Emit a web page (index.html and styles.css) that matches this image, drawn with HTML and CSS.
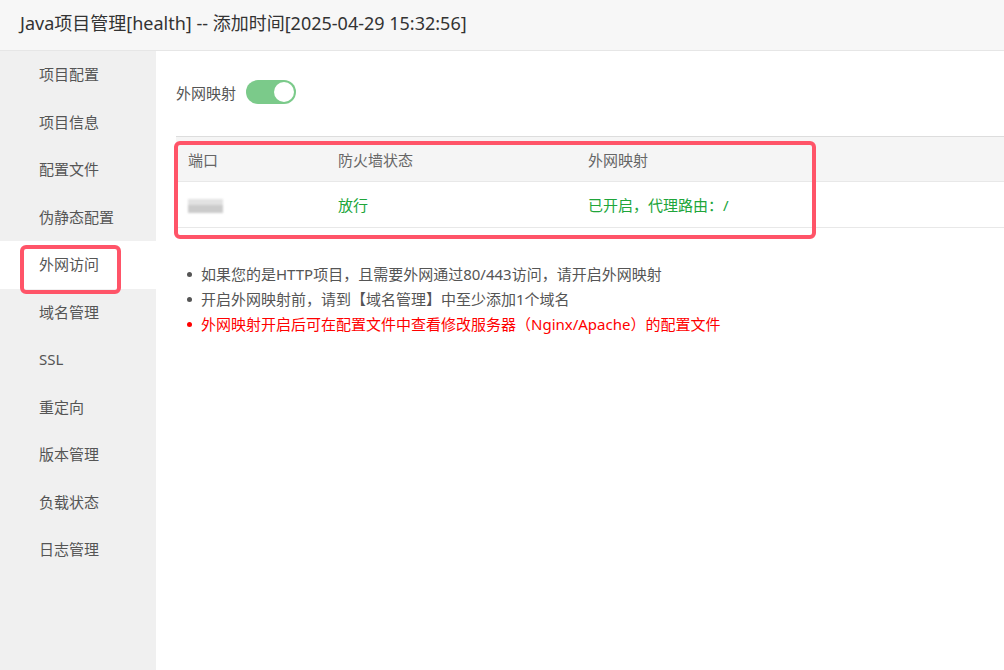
FILE: index.html
```html
<!DOCTYPE html>
<html lang="zh-CN">
<head>
    <meta charset="UTF-8">
    <title>Java项目管理</title>
    <link rel="stylesheet" href="styles.css">
</head>
<body>
    <div class="header">Java项目管理[health] -- 添加时间[2025-04-29 15:32:56]</div>
    <div class="layout">
        <div class="sidebar">
            <div class="nav-item">项目配置</div>
            <div class="nav-item">项目信息</div>
            <div class="nav-item">配置文件</div>
            <div class="nav-item">伪静态配置</div>
            <div class="nav-item active">外网访问<span class="mark nav-mark"></span></div>
            <div class="nav-item">域名管理</div>
            <div class="nav-item">SSL</div>
            <div class="nav-item">重定向</div>
            <div class="nav-item">版本管理</div>
            <div class="nav-item">负载状态</div>
            <div class="nav-item">日志管理</div>
        </div>
        <div class="main">
            <div class="toggle-row">
                <span>外网映射</span>
                <span class="switch on"><span class="knob"></span></span>
            </div>

            <div class="table-wrap">
                <div class="row head">
                    <div class="cell">端口</div>
                    <div class="cell">防火墙状态</div>
                    <div class="cell">外网映射</div>
                </div>
                <div class="row">
                    <div class="cell"><span class="blur-port"></span></div>
                    <div class="cell green">放行</div>
                    <div class="cell green">已开启，代理路由：/</div>
                </div>
                <span class="mark table-mark"></span>
            </div>

            <ul class="tips">
                <li>如果您的是HTTP项目，且需要外网通过80/443访问，请开启外网映射</li>
                <li>开启外网映射前，请到【域名管理】中至少添加1个域名</li>
                <li class="warn">外网映射开启后可在配置文件中查看修改服务器（Nginx/Apache）的配置文件</li>
            </ul>
        </div>
    </div>
</body>
</html>
```

FILE: styles.css
```css
body {
    margin: 0;
    font-family: "Noto Sans", "Noto Sans CJK SC", sans-serif;
    color: #555;
    background: #fff;
    overflow: hidden;
}
.header {
    height: 50px;
    line-height: 47px;
    padding-left: 20px;
    font-size: 18px;
    color: #333;
    background-color: #f7f7f7;
    border-bottom: 1px solid #e6e6e6;
}
.layout {
    display: flex;
    height: 619px;
}
.sidebar {
    width: 156px;
    background-color: #f0f0f0;
    flex-shrink: 0;
}
.nav-item {
    height: 47.5px;
    line-height: 47.5px;
    padding-left: 39px;
    font-size: 15px;
    color: #555;
}
.nav-item.active {
    background-color: #fff;
    position: relative;
}
.mark {
    position: absolute;
    box-sizing: border-box;
    border: 4px solid #ff5468;
    border-radius: 6px;
}
.nav-mark {
    left: 20px;
    top: 4px;
    width: 101px;
    height: 49px;
}
.main {
    flex: 1;
    padding: 29px 0 0 20px;
    font-size: 15px;
}
.toggle-row {
    display: flex;
    align-items: center;
    gap: 10px;
    height: 24px;
    color: #555;
}
.switch {
    width: 50px;
    height: 24px;
    border-radius: 12px;
    background-color: #ddd;
    position: relative;
}
.switch.on {
    background-color: #7bca8a;
}
.knob {
    position: absolute;
    right: 2px;
    top: 2px;
    width: 20px;
    height: 20px;
    border-radius: 50%;
    background: #fff;
}
.table-wrap {
    position: relative;
    margin-top: 32px;
    border-top: 1px solid #ddd;
}
.row {
    display: grid;
    grid-template-columns: 150px 250px 1fr;
    height: 45px;
    align-items: center;
    border-bottom: 1px solid #e8e8e8;
}
.row.head {
    height: 44px;
    background-color: #f5f5f5;
    color: #666;
}
.cell {
    padding-left: 12px;
}
.green {
    color: #20a53a;
}
.blur-port {
    display: block;
    width: 35px;
    height: 14px;
    margin-top: 2px;
    background: linear-gradient(#e2e2e2 0 45%, #cbcbcb 45% 100%);
    filter: blur(1px);
}
.table-mark {
    left: -2px;
    top: 4px;
    width: 642px;
    height: 98px;
}
.tips {
    list-style: none;
    margin: 34px 0 0;
    padding-left: 25px;
    line-height: 25px;
    color: #555;
}
.tips li {
    position: relative;
}
.tips li::before {
    content: "";
    position: absolute;
    left: -14px;
    top: 10px;
    width: 5px;
    height: 5px;
    border-radius: 50%;
    background: #555;
}
.tips li.warn {
    color: #f00;
}
.tips li.warn::before {
    background: #f00;
}
```
